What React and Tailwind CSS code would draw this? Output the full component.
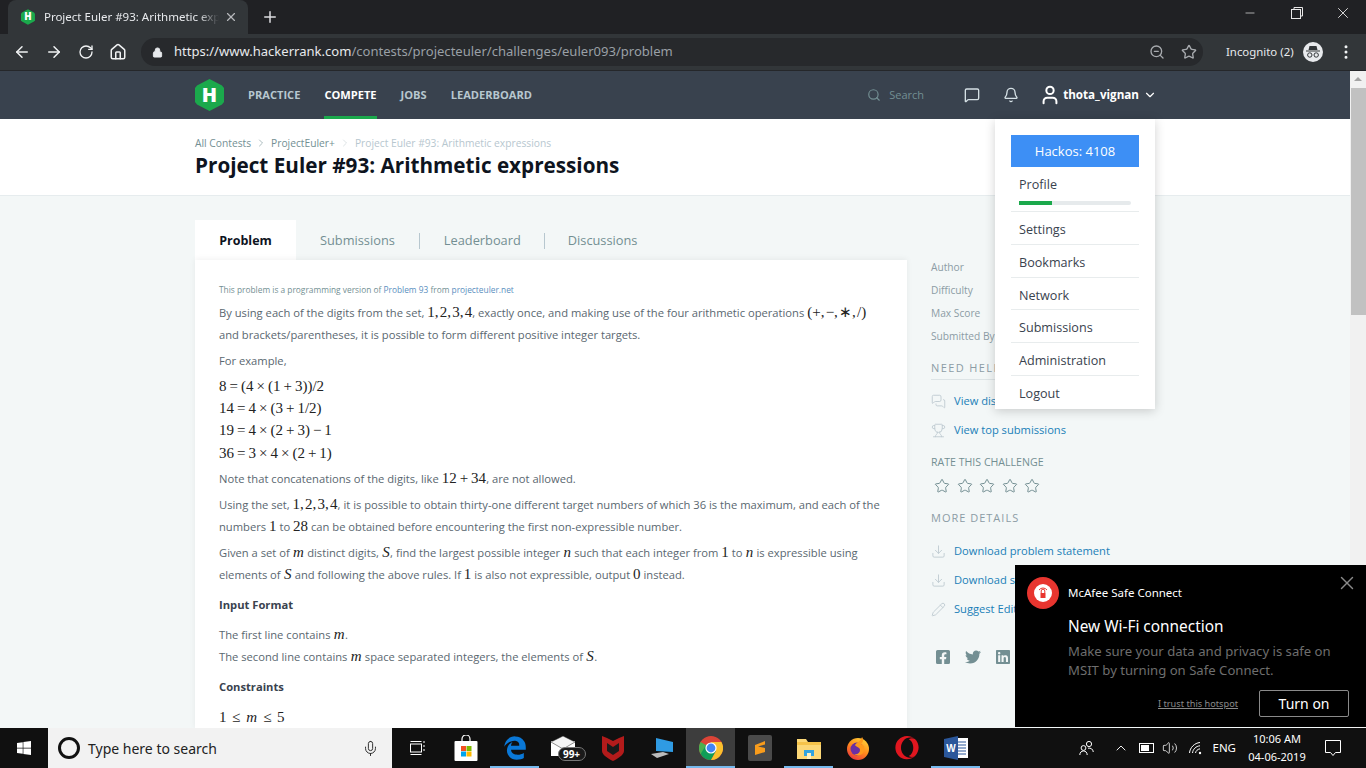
import React from "react";
import {
  ArrowLeft,
  ArrowRight,
  Bell,
  ChevronDown,
  ChevronRight,
  ChevronUp,
  Download,
  Home,
  Lock,
  MessageSquare,
  MessagesSquare,
  Mic,
  Minus,
  MoreVertical,
  Pencil,
  Plus,
  RotateCw,
  Search,
  Star,
  Trophy,
  User,
  Volume2,
  X,
  ZoomOut,
} from "lucide-react";
import { FaFacebookSquare, FaLinkedin, FaTwitter, FaWindows, FaEdgeLegacy, FaOpera } from "react-icons/fa";

// math runs use thin spaces, the MathJax output in the page is tight
const M = ({ children, i }) => (
  <span className={`font-['Liberation_Serif',serif] text-[15px] leading-none text-[#222] ${i ? "px-[0.4px] italic" : ""}`}>
    {children.replace(/, /g, ",\u200a").replace(/ /g, "\u2009")}
  </span>
);

function Hex({ size = 29, h = 32 }) {
  return (
    <svg width={size} height={h} viewBox="0 0 29 32">
      <polygon points="14.5,0 27,6.5 29,9 29,23 27,25.5 14.5,32 2,25.5 0,23 0,9 2,6.5" fill="#1ba94c" />
      <text x="14.5" y="23" textAnchor="middle" fontSize="20" fontWeight="800" fill="#fff" fontFamily="Open Sans">H</text>
    </svg>
  );
}

function ChromeTabs() {
  return (
    <div className="flex h-[34px] shrink-0 items-end bg-[#202124] pl-2">
      <div className="flex h-[34px] w-[240px] items-center rounded-t-lg bg-[#323639] pl-[13px] pr-[10px]">
        <Hex size={14} h={16} />
        <span className="ml-[9px] w-[176px] overflow-hidden whitespace-nowrap font-['Noto_Sans',sans-serif] text-[11.5px] text-[#e8eaed] [mask-image:linear-gradient(90deg,#000_88%,transparent)]">
          Project Euler #93: Arithmetic expressions
        </span>
        <X size={14} className="ml-[5px] text-[#b8babd]" />
      </div>
      <Plus size={18} className="mb-[8px] ml-[13px] text-[#dcdde0]" />
      <div className="flex-1" />
      <div className="mb-[12px] flex items-center text-[#e8e8e8]">
        <Minus size={14} strokeWidth={1.2} className="mr-[34px]" />
        <svg width="12" height="12" viewBox="0 0 12 12" fill="none" stroke="#e8e8e8" className="mr-[31px]">
          <rect x="0.5" y="2.5" width="9" height="9" />
          <path d="M3 2.5V.5h8.5V9H9.5" />
        </svg>
        <X size={18} strokeWidth={1.2} className="mr-[14px]" />
      </div>
    </div>
  );
}

function ChromeToolbar() {
  return (
    <div className="flex h-[37px] shrink-0 items-center border-b border-[#25272a] bg-[#323639] pl-[13px] text-[#f1f3f4]">
      <ArrowLeft size={18} className="mr-[14px]" />
      <ArrowRight size={18} className="mr-[14px]" />
      <RotateCw size={16} className="ml-[1px] mr-[15px]" />
      <Home size={18} className="mr-[14px]" />
      <div className="flex h-[28px] w-[1062px] items-center rounded-full bg-[#27292c] pl-[11px]">
        <Lock size={11} fill="#e8eaed" className="text-[#e8eaed]" />
        <span className="ml-[11px] font-['Noto_Sans',sans-serif] text-[13.05px] text-[#e8eaed]">
          https://www.hackerrank.com<span className="text-[#9aa0a6]">/contests/projecteuler/challenges/euler093/problem</span>
        </span>
        <div className="flex-1" />
        <ZoomOut size={16} className="text-[#a8abaf]" />
        <Star size={16} className="ml-[16px] mr-[6px] text-[#a8abaf]" />
      </div>
      <span className="ml-[23px] font-['Noto_Sans',sans-serif] text-[11.4px] text-[#e8eaed]">Incognito (2)</span>
      <div className="ml-[9px] flex h-[20px] w-[20px] items-center justify-center rounded-full bg-[#e8eaed]">
        <svg width="16" height="14" viewBox="0 0 16 14" fill="#323639">
          <path d="M4.5 1h7l1 4h-9zM1 5.5h14V6.5H1z" />
          <circle cx="4.8" cy="10" r="2.2" fill="none" stroke="#323639" />
          <circle cx="11.2" cy="10" r="2.2" fill="none" stroke="#323639" />
        </svg>
      </div>
      <MoreVertical size={18} className="ml-[14px]" />
    </div>
  );
}

function NavBar() {
  return (
    <div className="h-[48px] shrink-0 bg-[#39424e]">
      <div className="relative mx-auto flex h-full w-[960px] items-center">
        <Hex />
        <div className="ml-[24px] flex h-full items-center gap-[24px] text-[11.1px] font-bold text-[#b7c7cf]">
          <span>PRACTICE</span>
          <span className="flex h-full items-center border-b-[3px] border-[#1ba94c] pt-[3px] text-white">COMPETE</span>
          <span>JOBS</span>
          <span>LEADERBOARD</span>
        </div>
        <div className="flex-1" />
        <Search size={14} className="text-[#738f93]" />
        <span className="ml-[8px] text-[11px] text-[#738f93]">Search</span>
        <MessageSquare size={16} className="ml-[40px] text-[#d5e0e5]" />
        <Bell size={16} className="ml-[23px] text-[#d5e0e5]" />
        <User size={22} strokeWidth={2.2} className="ml-[20px] text-white" />
        <span className="ml-[2px] text-[11.65px] font-bold text-white">thota_vignan</span>
        <ChevronDown size={14} className="ml-[4px] mr-[-2px] text-white" />
        <UserMenu />
      </div>
    </div>
  );
}

function UserMenu() {
  const items = ["Settings", "Bookmarks", "Network", "Submissions", "Administration", "Logout"];
  return (
    <div className="absolute right-0 top-[48px] z-20 h-[290px] w-[160px] bg-white px-4 pt-4 shadow-[0_2px_10px_rgba(0,0,0,0.18)]">
      <div className="flex h-[32px] items-center justify-center bg-[#3d8ff5] pt-px text-[13px] text-white">Hackos: 4108</div>
      <div className="border-b border-[#e8eced] px-2 pb-[6px]">
        <div className="flex h-[34px] items-center pt-[2px] text-[12.6px] text-[#39424e]">Profile</div>
        <div className="h-[4px] w-[112px] rounded-sm bg-[#e6eaec]">
          <div className="h-full w-[33px] bg-[#1ba94c]" />
        </div>
      </div>
      {items.map((item, i) => (
        <div
          key={item}
          className={`flex h-[32.8px] items-center px-2 pt-[5px] text-[12.6px] text-[#39424e] ${i < items.length - 1 ? "border-b border-[#e8eced]" : ""}`}
        >
          {item}
        </div>
      ))}
    </div>
  );
}

function ProblemCard() {
  return (
    <div className="w-[712px] bg-white px-6 pt-6 text-[11.2px] leading-[22px] text-[#5a6770] shadow-[0_-1px_6px_rgba(0,0,0,0.06)]">
      <p className="h-[12px] text-[8.35px] leading-[12px] text-[#738f93]">
        This problem is a programming version of <span className="text-[#5b8fc0]">Problem 93</span> from <span className="text-[#5b8fc0]">projecteuler.net</span>
      </p>
      <p className="mt-[6px] whitespace-nowrap">
        By using each of the digits from the set, <M>1, 2, 3, 4</M>, exactly once, and making use of the four arithmetic operations <M>(+, −, ∗, /)</M>
      </p>
      <p>and brackets/parentheses, it is possible to form different positive integer targets.</p>
      <p className="mt-[4px]">For example,</p>
      <div className="mt-[4px]">
        <p><M>8 = (4 × (1 + 3))/2</M></p>
        <p><M>14 = 4 × (3 + 1/2)</M></p>
        <p><M>19 = 4 × (2 + 3) − 1</M></p>
        <p className="mt-[1px]"><M>36 = 3 × 4 × (2 + 1)</M></p>
      </div>
      <p className="mt-[3px]">Note that concatenations of the digits, like <M>12 + 34</M>, are not allowed.</p>
      <p className="mt-[4px] whitespace-nowrap">
        Using the set, <M>1, 2, 3, 4</M>, it is possible to obtain thirty-one different target numbers of which 36 is the maximum, and each of the
      </p>
      <p>numbers <M>1</M> to <M>28</M> can be obtained before encountering the first non-expressible number.</p>
      <p className="mt-[4px] whitespace-nowrap">
        Given a set of <M i>m</M> distinct digits, <M i>S</M>, find the largest possible integer <M i>n</M> such that each integer from <M>1</M> to <M i>n</M> is expressible using
      </p>
      <p>elements of <M i>S</M> and following the above rules. If <M>1</M> is also not expressible, output <M>0</M> instead.</p>
      <p className="mt-[8px] font-bold text-[#39424e]">Input Format</p>
      <p className="mt-[8px]">The first line contains <M i>m</M>.</p>
      <p>The second line contains <M i>m</M> space separated integers, the elements of <M i>S</M>.</p>
      <p className="mt-[8px] font-bold text-[#39424e]">Constraints</p>
      <p className="mt-[9px] tracking-[1.3px]"><M>1 ≤ </M><M i>m</M><M> ≤ 5</M></p>
    </div>
  );
}

function SideLink({ icon: Icon, children, className }) {
  return (
    <div className={`flex items-center text-[11.15px] text-[#1a7fb8] ${className}`}>
      <Icon size={15} strokeWidth={1.5} className="mr-[8px] text-[#c0ccd2]" />
      <span className="whitespace-nowrap">{children}</span>
    </div>
  );
}

function Sidebar() {
  return (
    <div className="ml-[24px] w-[224px] text-[10.2px] text-[#8c9ca5]">
      <div className="space-y-[9px] leading-[14px]">
        <p>Author</p>
        <p>Difficulty</p>
        <p>Max Score</p>
        <p>Submitted By</p>
      </div>
      <p className="mt-[17px] border-b border-[#dde4e6] pb-[3px] text-[11px] leading-[16px] tracking-[1.4px] text-[#8c9ca5]">NEED HELP?</p>
      <SideLink icon={MessagesSquare} className="mt-[13px] h-[16px]">View discussions</SideLink>
      <SideLink icon={Trophy} className="mt-[13px] h-[16px]">View top submissions</SideLink>
      <p className="mt-[17px] text-[10.6px] leading-[14px] text-[#738f93]">RATE THIS CHALLENGE</p>
      <div className="ml-[3px] mt-[9px] flex gap-[6.5px] text-[#738f93]">
        {[0, 1, 2, 3, 4].map((n) => <Star key={n} size={16} strokeWidth={1.5} />)}
      </div>
      <p className="mt-[17px] text-[11px] leading-[14px] tracking-[1px] text-[#8c9ca5]">MORE DETAILS</p>
      <SideLink icon={Download} className="mt-[18px] h-[16px]">Download problem statement</SideLink>
      <SideLink icon={Download} className="mt-[13px] h-[16px]">Download sample test cases</SideLink>
      <SideLink icon={Pencil} className="mt-[13px] h-[16px]">Suggest Edits</SideLink>
      <div className="ml-[4px] mt-[32px] flex gap-[14px] text-[#738f93]">
        <FaFacebookSquare size={16} />
        <FaTwitter size={16} />
        <FaLinkedin size={16} />
      </div>
    </div>
  );
}

function Page() {
  return (
    <div className="flex min-h-0 flex-1">
      <div className="flex w-[1350px] flex-col overflow-hidden bg-[#f3f7f7]">
        <NavBar />
        <div className="h-[77px] shrink-0 border-b border-[#e6ecee] bg-white pt-[17px]">
          <div className="mx-auto w-[960px]">
            <div className="flex h-[14px] items-center text-[10.25px] leading-[14px] text-[#738f93]">
              All Contests
              <ChevronRight size={12} strokeWidth={1.2} className="mx-[4px]" />
              ProjectEuler+
              <ChevronRight size={12} strokeWidth={1.2} className="mx-[4px] text-[#c6d0d3]" />
              <span className="text-[#b7c7cf]">Project Euler #93: Arithmetic expressions</span>
            </div>
            <h1 className="text-[20.7px] font-bold leading-[30px] text-[#0e141e]">Project Euler #93: Arithmetic expressions</h1>
          </div>
        </div>
        <div className="mx-auto mt-[24px] w-[960px]">
          <div className="flex h-[40px] items-center text-[12.8px] text-[#738f93]">
            <div className="flex h-full w-[101px] items-center justify-center bg-white pt-[2px] text-[12.5px] font-bold text-[#0e141e]">Problem</div>
            <div className="flex h-full items-center pt-[2px]">
              <span className="ml-[24px]">Submissions</span>
              <span className="ml-[24px] h-[16px] w-px bg-[#b7c7cf]" />
              <span className="ml-[24px]">Leaderboard</span>
              <span className="ml-[23px] h-[16px] w-px bg-[#b7c7cf]" />
              <span className="ml-[23px]">Discussions</span>
            </div>
          </div>
          <div className="flex items-start">
            <ProblemCard />
            <Sidebar />
          </div>
        </div>
      </div>
      <div className="flex w-[16px] flex-col items-center bg-[#f1f1f1]">
        <div className="mt-[6px] h-0 w-0 border-x-[4px] border-b-[4px] border-x-transparent border-b-[#a3a3a3]" />
        <div className="mt-[7px] h-[227px] w-[15px] bg-[#c1c1c1]" />
      </div>
    </div>
  );
}

function Notification() {
  return (
    <div className="absolute left-[1015px] top-[565px] z-30 h-[162px] w-[351px] bg-black pl-[12px] font-['Noto_Sans',sans-serif]">
      <div className="flex h-[54px] items-center pt-[1px]">
        <div className="flex h-[32px] w-[32px] items-center justify-center rounded-full bg-[#e8352f]">
          <div className="flex h-[18px] w-[18px] items-center justify-center rounded-full bg-white">
            <svg width="10" height="12" viewBox="0 0 10 12">
              <rect x="2.5" y="6" width="5" height="5" fill="#e8352f" />
              <path d="M3.2 6V4a1.8 1.8 0 0 1 3.6 0v2M1 3a5 5 0 0 1 8 0" fill="none" stroke="#e8352f" strokeWidth="1" />
            </svg>
          </div>
        </div>
        <span className="ml-[9px] text-[11.5px] text-white">McAfee Safe Connect</span>
        <X size={22} strokeWidth={1.6} className="absolute right-[8px] top-[7px] text-[#8a8a8a]" />
      </div>
      <div className="pl-[41px]">
        <p className="mt-[-3px] text-[15.4px] leading-[22px] text-white">New Wi-Fi connection</p>
        <p className="mt-[4px] w-[284px] text-[13.15px] leading-[19px] text-[#6e6e6e]">Make sure your data and privacy is safe on MSIT by turning on Safe Connect.</p>
        <div className="mt-[10px] flex items-center">
          <span className="ml-[90px] text-[9.2px] text-[#8a8a8a] underline">I trust this hotspot</span>
          <span className="ml-[21px] flex h-[27px] w-[90px] items-center justify-center rounded-[2px] border border-[#8a8a8a] text-[14px] text-white">Turn on</span>
        </div>
      </div>
    </div>
  );
}

const Cell = ({ children, active, on }) => (
  <div className={`relative flex h-full w-[49px] items-center justify-center ${active ? "bg-[#3d3d3d]" : ""}`}>
    {children}
    {on && <div className="absolute inset-x-0 bottom-0 h-[2px] bg-[#76b9ed]" />}
  </div>
);

function TaskIcons() {
  return (
    <>
      <Cell>
        <svg width="16" height="16" viewBox="0 0 16 16" fill="none" stroke="#fff" strokeWidth="1">
          <rect x="1.5" y="4" width="11" height="8" />
          <path d="M1.5 1.5h11M1.5 14.5h11M15 1v2M15 5v2M15 9v2" />
        </svg>
      </Cell>
      <Cell>
        <svg width="24" height="26" viewBox="0 0 24 26">
          <path d="M8 7V4a4 4 0 0 1 8 0v3" fill="none" stroke="#fff" strokeWidth="1.2" />
          <rect x="0.5" y="6" width="23" height="20" rx="1" fill="#fff" />
          <rect x="7" y="11" width="5" height="5" fill="#f25022" />
          <rect x="12.5" y="11" width="5" height="5" fill="#7fba00" />
          <rect x="7" y="16.5" width="5" height="5" fill="#00a4ef" />
          <rect x="12.5" y="16.5" width="5" height="5" fill="#ffb900" />
        </svg>
      </Cell>
      <Cell on><FaEdgeLegacy size={24} className="text-[#0a78d7]" /></Cell>
      <Cell>
        <div className="relative h-[24px] w-[26px]">
          <svg width="24" height="20" viewBox="0 0 24 20">
            <rect y="5" width="24" height="15" fill="#fff" />
            <path d="M0 6 12 0l12 6-12 7z" fill="#f4f4f4" stroke="#222" strokeWidth=".5" />
          </svg>
          <span className="absolute left-[7px] top-[11px] flex h-[14px] w-[28px] items-center justify-center rounded-full border border-[#777] bg-[#1a1a1a] font-['Noto_Sans',sans-serif] text-[10px] font-bold text-white">99+</span>
        </div>
      </Cell>
      <Cell>
        <svg width="22" height="26" viewBox="0 0 22 26">
          <path d="M0 1 5 3l6 3 6-3 5-2v15c0 4-7 8-11 10C7 24 0 20 0 16z" fill="#b31b1b" />
          <path d="M5 8v8l6 4 6-4V8l-6 4z" fill="#1a1a1a" />
        </svg>
      </Cell>
      <Cell>
        <svg width="24" height="24" viewBox="0 0 24 24">
          <path d="M6 2 23 6v10L6 15z" fill="#2f9be3" />
          <path d="M1 18 13 16l6 2-12 4z" fill="#bcbcbc" />
        </svg>
      </Cell>
      <Cell active on>
        <svg width="24" height="24" viewBox="0 0 24 24">
          <circle cx="12" cy="12" r="12" fill="#db4437" />
          <path d="M12 12 1.6 18a12 12 0 0 1 0-12z" fill="#4caf50" />
          <path d="M1.6 18 7 9l5 3 5 3-5 9A12 12 0 0 1 1.6 18z" fill="#0f9d58" />
          <path d="M12 24a12 12 0 0 0 10.4-18H12l5 9z" fill="#fbc02d" />
          <circle cx="12" cy="12" r="5.6" fill="#fff" />
          <circle cx="12" cy="12" r="4.4" fill="#4285f4" />
        </svg>
      </Cell>
      <Cell>
        <svg width="24" height="26" viewBox="0 0 24 26">
          <rect width="24" height="26" rx="2" fill="#4a4a4a" />
          <path d="M17 6 7 10v4l10 3v-4L10 11.5 17 9.5zM7 20l10-3v-1L7 14z" fill="#f89c1c" />
        </svg>
      </Cell>
      <Cell on>
        <svg width="24" height="22" viewBox="0 0 24 22">
          <path d="M0 2h9l2 3h13v17H0z" fill="#fcd877" />
          <rect y="5" width="24" height="3" fill="#f5c34a" />
          <rect x="7" y="13" width="10" height="6" fill="#30a3e0" />
          <rect x="10" y="16" width="4" height="6" fill="#fcf0c0" />
        </svg>
      </Cell>
      <Cell>
        <svg width="24" height="24" viewBox="0 0 24 24">
          <defs>
            <linearGradient id="foxBody" x1="0.8" y1="0" x2="0.2" y2="1">
              <stop offset="0" stopColor="#ffd43a" />
              <stop offset="0.5" stopColor="#ff8a1c" />
              <stop offset="1" stopColor="#e8303f" />
            </linearGradient>
          </defs>
          <circle cx="12" cy="13" r="11" fill="url(#foxBody)" />
          <circle cx="11" cy="13" r="6.5" fill="#6b2fa3" />
          <path d="M16 1c2 3 1 5-1 7 3 1 4 4 3 7-1 4-6 6-10 3 3 1 6-1 6-4s-4-3-5-5c2-3 6-4 7-8z" fill="#ff9a1c" />
        </svg>
      </Cell>
      <Cell><FaOpera size={24} className="text-[#e0161f]" /></Cell>
      <Cell on>
        <svg width="24" height="24" viewBox="0 0 24 24">
          <rect x="7" y="2" width="17" height="20" fill="#fff" />
          <path d="M14 6h8M14 9h8M14 12h8M14 15h8M14 18h8" stroke="#2b579a" strokeWidth="1.2" />
          <path d="M0 3 14 0v24L0 21z" fill="#2b579a" />
          <text x="7" y="16" textAnchor="middle" fill="#fff" fontSize="10" fontWeight="700" fontFamily="Liberation Sans">W</text>
        </svg>
      </Cell>
    </>
  );
}

function Taskbar() {
  return (
    <div className="flex h-[40px] shrink-0 items-center bg-[#101010] font-['Noto_Sans',sans-serif] text-white">
      <div className="flex h-full w-[48px] items-center justify-center">
        <FaWindows size={16} />
      </div>
      <div className="flex h-full w-[344px] items-center bg-[#f2f2f2] pl-[10px] pr-[13px] text-[#222]">
        <div className="h-[22px] w-[22px] rounded-full border-[3px] border-[#111]" />
        <span className="ml-[8px] pt-px text-[14px]">Type here to search</span>
        <div className="flex-1" />
        <Mic size={17} strokeWidth={1.3} />
      </div>
      <TaskIcons />
      <div className="flex-1" />
      <svg width="15" height="16" viewBox="0 0 15 16" fill="none" stroke="#fff" strokeWidth="1">
        <circle cx="10" cy="4" r="2.6" />
        <circle cx="4.5" cy="8" r="2.4" />
        <path d="M.8 15c0-2.6 1.6-4 3.7-4s3.7 1.4 3.7 4M9 8.2c2.800-.6 5 1 5.300 3.800" />
      </svg>
      <ChevronUp size={16} strokeWidth={1.4} className="ml-[19px]" />
      <div className="ml-[10px] flex h-[10px] w-[15px] items-center border border-white p-px">
        <div className="h-full w-[8px] bg-white" />
      </div>
      <Volume2 size={16} strokeWidth={1.2} className="ml-[8px]" />
      <svg width="13" height="13" viewBox="0 0 13 13" fill="none" stroke="#fff" strokeWidth="1" className="ml-[11px]">
        <path d="M.5 11C1 5.500 5.500 1 11 .5M3.500 11c.4-3.800 3.400-6.800 7.500-7.200M6.500 11c.3-2 2-3.800 4.500-4.200" />
        <circle cx="11" cy="11" r="1.200" fill="#fff" stroke="none" />
      </svg>
      <span className="ml-[10px] text-[11.5px]">ENG</span>
      <div className="ml-[6px] flex w-[70px] flex-col items-center whitespace-nowrap text-[11px] leading-[18px]">
        <span>10:06 AM</span>
        <span>04-06-2019</span>
      </div>
      <div className="ml-[13px] mr-[25px]">
        <svg width="16" height="16" viewBox="0 0 16 16" fill="none" stroke="#fff">
          <path d="M.5.5h15v12h-5l-2.500 3-2.500-3h-5z" />
        </svg>
      </div>
    </div>
  );
}

export default function App() {
  return (
    <div className="relative flex h-screen w-[1366px] flex-col overflow-hidden font-['Open_Sans',sans-serif]">
      <ChromeTabs />
      <ChromeToolbar />
      <Page />
      <Taskbar />
      <Notification />
    </div>
  );
}
